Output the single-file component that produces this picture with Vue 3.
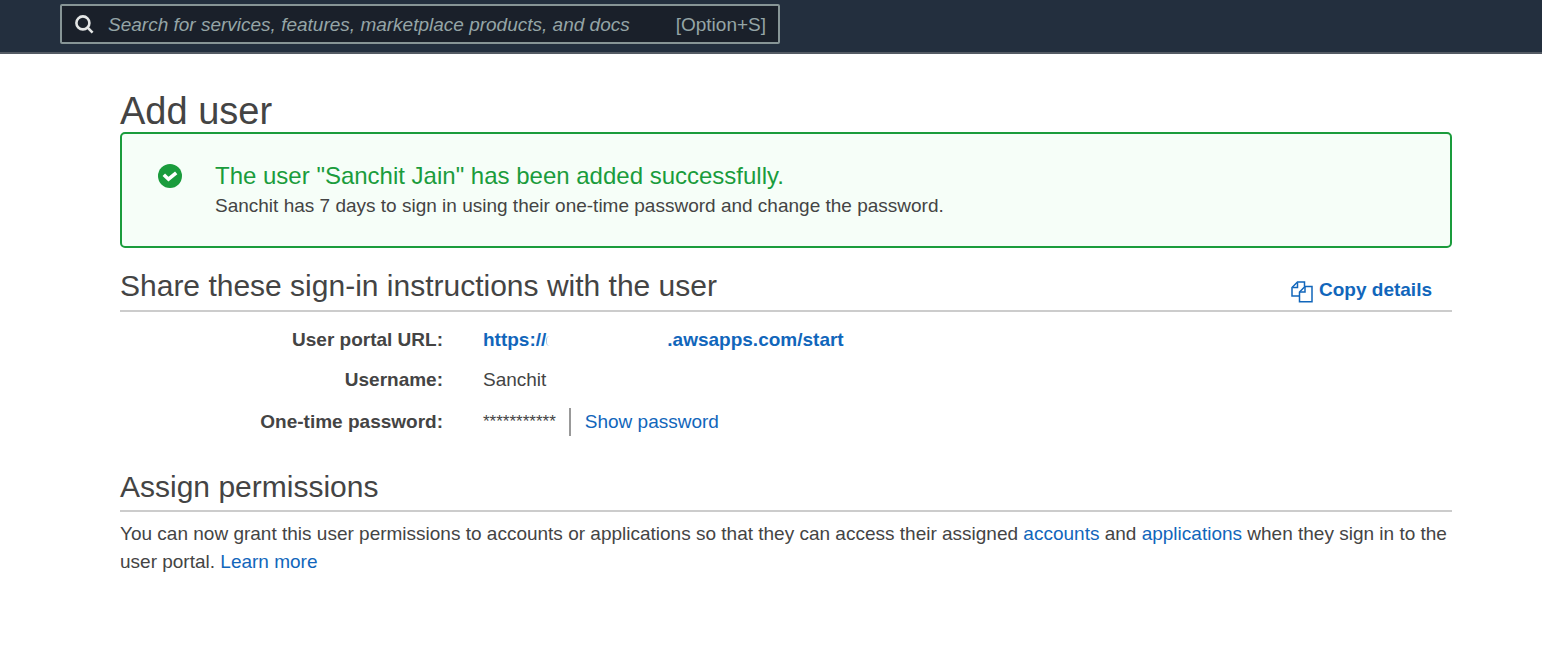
<script setup>
import { ref } from 'vue'

const query = ref('')
</script>

<template>
  <div class="page">
    <header class="topbar">
      <label class="search">
        <svg class="search-icon" viewBox="0 0 20 20" aria-hidden="true">
          <circle cx="8.9" cy="8.9" r="6.5" />
          <path d="M13.4 13.4L18.6 18.6" />
        </svg>
        <input
          v-model="query"
          type="text"
          aria-label="Search"
          placeholder="Search for services, features, marketplace products, and docs"
        />
        <span class="shortcut">[Option+S]</span>
      </label>
    </header>

    <main class="content">
      <h1>Add user</h1>

      <section class="alert" role="status">
        <svg class="check" viewBox="0 0 24 24" aria-hidden="true">
          <circle cx="12" cy="12" r="12" />
          <path d="M5.8 10.8L10.5 15.2L18.2 8.8" />
        </svg>
        <div>
          <h2 class="alert-title">The user "Sanchit Jain" has been added successfully.</h2>
          <p>Sanchit has 7 days to sign in using their one-time password and change the password.</p>
        </div>
      </section>

      <section class="share">
        <div class="section-head">
          <h2>Share these sign-in instructions with the user</h2>
          <button type="button" class="copy">
            <svg viewBox="0 0 22 22" aria-hidden="true">
              <path d="M8.5 15H1V6.5L6.5 1H13.5V5.5" />
              <path d="M1.5 6.5H6.5V1.5" />
              <path d="M8.5 11V20.8H21V5.5H14L8.5 11Z" />
              <path d="M9 11H14V6" />
            </svg>
            <span>Copy details</span>
          </button>
        </div>
        <dl>
          <dt>User portal URL:</dt>
          <dd>
            <a href="#" class="portal"><span>https://</span><span class="hidden-part"></span><span>.awsapps.com/start</span></a>
          </dd>
          <dt>Username:</dt>
          <dd>Sanchit</dd>
          <dt class="password-label">One-time password:</dt>
          <dd class="password">
            <span class="mask">***********</span>
            <button type="button" class="show">Show password</button>
          </dd>
        </dl>
      </section>

      <section class="assign">
        <div class="section-head">
          <h2>Assign permissions</h2>
        </div>
        <p>
          You can now grant this user permissions to accounts or applications so that they can access their assigned
          <a href="#">accounts</a> and <a href="#">applications</a> when they sign in to the user portal.
          <a href="#">Learn more</a>
        </p>
      </section>
    </main>
  </div>
</template>

<style>
body {
  margin: 0;
  background: #fff;
}
</style>

<style scoped>
.page {
  font-family: "Liberation Sans", Arial, sans-serif;
  font-size: 19px;
  line-height: 28px;
  color: #444;
}

h1,
h2,
p,
dl,
dd {
  margin: 0;
  font-weight: normal;
}

a,
button {
  color: #1166bb;
  text-decoration: none;
}

button {
  padding: 0;
  border: 0;
  background: none;
  font: inherit;
  cursor: pointer;
}

.topbar {
  box-sizing: border-box;
  height: 54px;
  padding: 4px 60px 0;
  background: #232f3e;
  border-bottom: 2px solid #545b64;
}

.search {
  box-sizing: border-box;
  display: flex;
  align-items: center;
  width: 100%;
  max-width: 720px;
  height: 40px;
  padding: 2px 12px 0;
  border: 2px solid #879596;
  border-radius: 2px;
  background: #1a202a;
  color: #95a5a6;
}

.search-icon {
  flex: none;
  width: 20px;
  height: 20px;
  margin-right: 14px;
  margin-bottom: 2px;
  fill: none;
  stroke: #e4e6e6;
  stroke-width: 2.6;
}

.search input {
  flex: 1;
  min-width: 0;
  padding: 0;
  border: 0;
  outline: 0;
  background: none;
  font: inherit;
  font-style: italic;
  color: #fff;
}

.search input::placeholder {
  color: #95a5a6;
  opacity: 1;
}

.content {
  padding: 36px 90px 0 120px;
}

h1 {
  font-size: 38px;
  line-height: 42px;
}

.alert {
  display: flex;
  gap: 33px;
  padding: 26px 36px;
  border: 2px solid #1a9c3c;
  border-radius: 5px;
  background: #f6fef8;
}

.check {
  flex: none;
  width: 24px;
  height: 24px;
  margin-top: 4px;
  fill: #1a9c3c;
}

.check path {
  fill: none;
  stroke: #fff;
  stroke-width: 3.6;
}

.alert-title {
  font-size: 24px;
  line-height: 32px;
  color: #1a9c3c;
}

.section-head {
  display: flex;
  justify-content: space-between;
  align-items: center;
  padding-right: 20px;
  border-bottom: 2px solid #ccc;
}

.section-head h2 {
  font-size: 30px;
  line-height: 48px;
}

.share {
  margin-top: 14px;
}

.copy {
  display: flex;
  align-items: center;
  gap: 6px;
  margin-top: 8px;
  font-weight: bold;
}

.copy svg {
  width: 22px;
  height: 22px;
  margin-top: 4px;
  fill: none;
  stroke: #1166bb;
  stroke-width: 1.5;
}

dl {
  display: grid;
  grid-template-columns: 323px 1fr;
  gap: 12px 40px;
  padding-top: 14px;
}

dt {
  font-weight: bold;
  text-align: right;
}

.portal {
  display: flex;
  font-weight: bold;
}

/* Redacted host name: only the edge of its first letter stays in view. */
.hidden-part {
  box-sizing: border-box;
  width: 121px;
  height: 10px;
  margin-top: 10px;
  border-left: 1px solid #a9c8e6;
  border-radius: 4px;
}

.password-label,
.password {
  padding-top: 2px;
}

.password {
  display: flex;
}

.mask {
  padding-right: 13px;
  border-right: 2px solid #999;
  font-size: 17px;
}

.show {
  margin-left: 14px;
}

.assign {
  margin-top: 28px;
}

.assign h2 {
  line-height: 46px;
}

.assign p {
  padding-top: 8px;
}
</style>
